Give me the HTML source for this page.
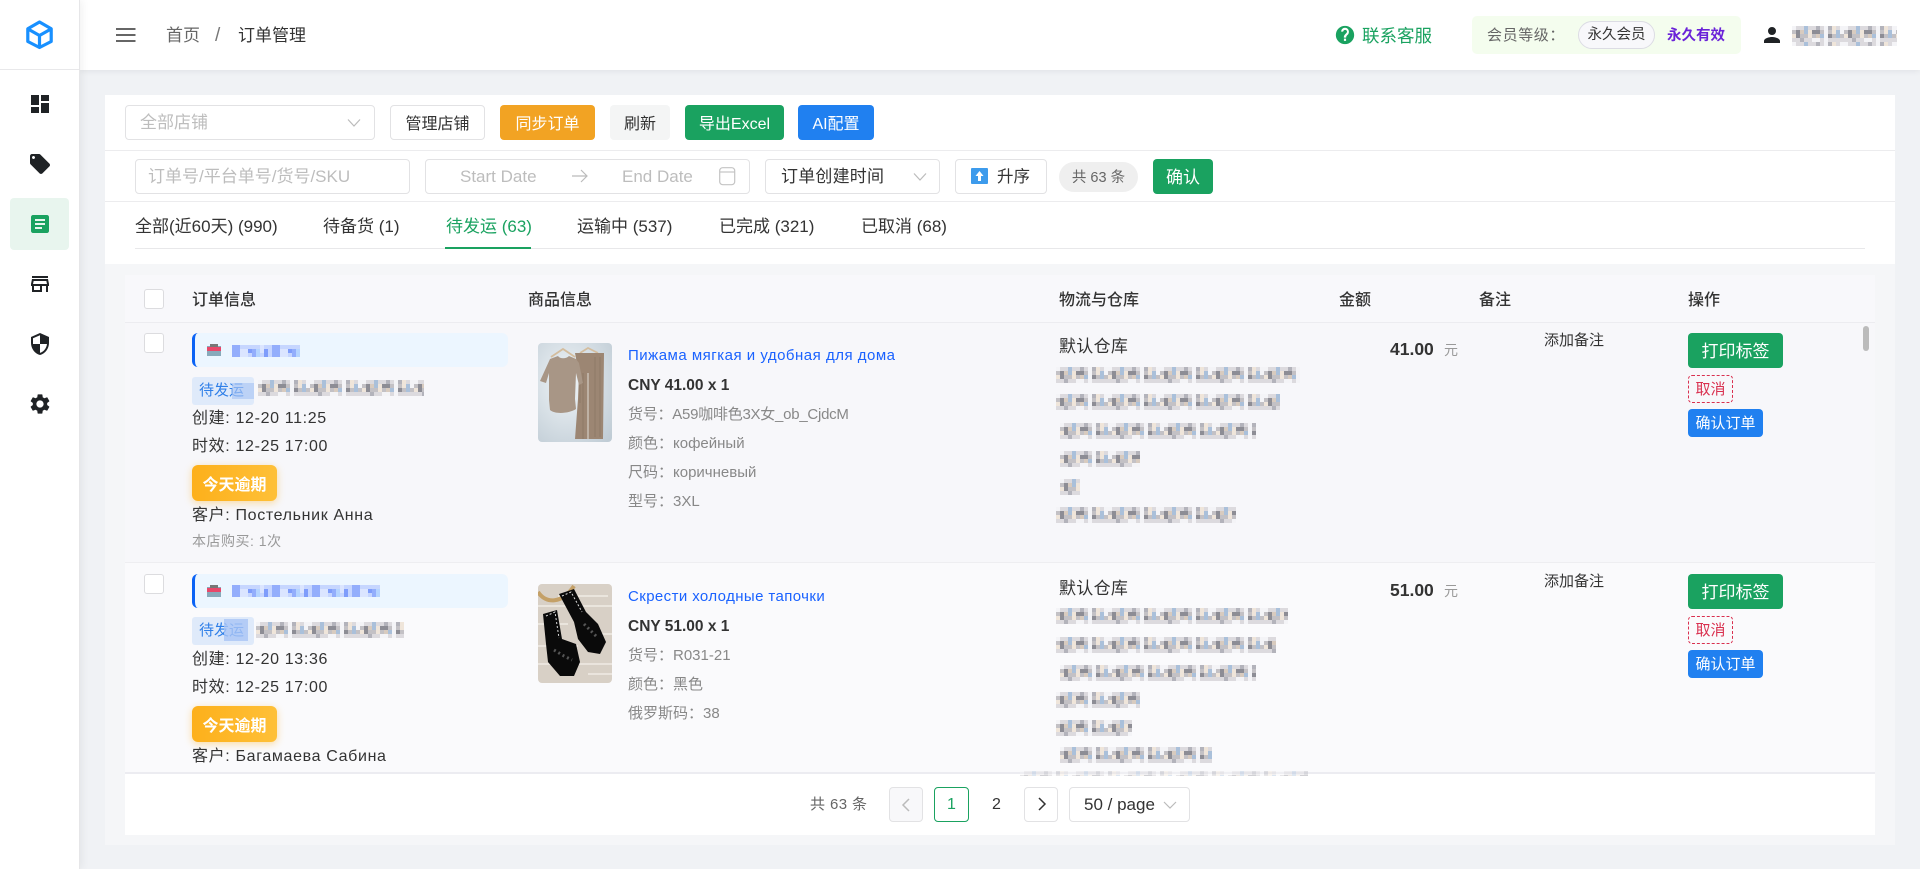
<!DOCTYPE html>
<html lang="zh-CN"><head><meta charset="utf-8"><title>订单管理</title>
<style>
*{box-sizing:border-box}
html,body{margin:0;padding:0;width:1920px;height:869px;overflow:hidden;background:#f0f2f5;font-family:"Liberation Sans","Noto Sans CJK SC",sans-serif;color:#333}
.a{position:absolute}
.t{position:absolute;white-space:nowrap;line-height:24px;height:24px}
.b{position:absolute;display:flex;align-items:center;justify-content:center;border-radius:4px;font-size:16px;white-space:nowrap;padding-bottom:2px}
.o{background:#fff;border:1px solid #e2e2e4;color:#333}
.in{position:absolute;background:#fff;border:1px solid #e2e2e4;border-radius:4px}
.ph{color:#bdbdbd}
.g{color:#888;font-size:15px}
.d{font-size:16px;color:#333;letter-spacing:.65px}
.over{position:absolute;left:192px;width:85px;height:36px;border-radius:6px;background:linear-gradient(90deg,#fdb01b,#fec038);box-shadow:0 2px 8px rgba(253,176,27,.4);color:#fff;font-weight:700;font-size:16px;display:flex;align-items:center;justify-content:center}
.shop{position:absolute;left:192px;width:316px;height:34px;background:#ecf6ff;border-left:3px solid #0a62f5;border-radius:6px}
.tag{position:absolute;left:192px;width:62px;height:28px;background:#dfeafa;border-radius:3px;color:#2f7fe8;font-size:15px;line-height:28px;padding-left:7px;overflow:hidden}
.cb{position:absolute;left:144px;width:20px;height:20px;background:#fff;border:1px solid #dcdcdf;border-radius:3px}
.tab{font-size:17px;top:215px}
.th{font-size:16px;font-weight:500;top:289px}
</style></head><body>

<!-- sidebar -->
<div class="a" style="left:0;top:0;width:80px;height:869px;background:#fff;border-right:1px solid #e6e6e8;box-shadow:2px 0 8px rgba(0,0,0,.06);z-index:3"></div>
<div class="a" style="left:0;top:69px;width:79px;height:1px;background:#e8e8ea;z-index:4"></div>
<div class="a" style="left:10px;top:198px;width:59px;height:52px;background:#e8f5ee;border-radius:4px;z-index:4"></div>
<svg class="a" style="left:0;top:0;z-index:5" width="80" height="440" viewBox="0 0 80 440">
<path d="M39.500 22 51.200 28.800V41.500L39.500 47.500 27.800 41.500V28.800Z M28 29 39.500 35.500 51 29 M39.500 35.500V47" fill="none" stroke="#1890ff" stroke-width="3.200" stroke-linejoin="round"/>
<g transform="translate(28 92)" fill="#1f2225"><path d="M3 13h8V3H3v10zm0 8h8v-6H3v6zm10 0h8V11h-8v10zm0-18v6h8V3h-8z"/></g>
<g transform="translate(28 152)" fill="#1f2225"><path d="M21.410 11.580l-9-9C12.050 2.220 11.550 2 11 2H4c-1.100 0-2 .9-2 2v7c0 .55.22 1.050.59 1.420l9 9c.36.36.86.58 1.410.58.55 0 1.050-.22 1.410-.59l7-7c.37-.36.59-.86.59-1.410 0-.55-.23-1.060-.59-1.420zM5.500 7C4.670 7 4 6.330 4 5.500S4.670 4 5.500 4 7 4.670 7 5.500 6.330 7 5.500 7z"/></g>
<g transform="translate(28 212)" fill="#1aa260"><path d="M19 3H5c-1.100 0-2 .9-2 2v14c0 1.100.9 2 2 2h14c1.100 0 2-.9 2-2V5c0-1.100-.9-2-2-2zm-5 14H7v-2h7v2zm3-4H7v-2h10v2zm0-4H7V7h10v2z"/></g>
<g transform="translate(28 272)" fill="#1f2225"><path d="M18.360 9l.6 3H5.040l.6-3h12.720M20 4H4v2h16V4zm0 3H4l-1 5v2h1v6h10v-6h4v6h2v-6h1v-2l-1-5zM6 18v-4h6v4H6z"/></g>
<g transform="translate(28 332)" fill="#1f2225"><path d="M12 1 3 5v6c0 5.550 3.840 10.740 9 12 5.160-1.260 9-6.450 9-12V5l-9-4zm0 10.990h7c-.53 4.120-3.280 7.790-7 8.940V12H5V6.300l7-3.110v8.800z"/></g>
<g transform="translate(28 392)" fill="#1f2225"><path d="M19.140 12.940c.04-.3.060-.61.060-.94 0-.32-.020-.64-.070-.94l2.030-1.580a.49.49 0 0 0 .12-.61l-1.920-3.320a.488.488 0 0 0-.59-.22l-2.390.96c-.5-.38-1.030-.7-1.620-.94l-.36-2.540a.484.484 0 0 0-.48-.41h-3.840c-.24 0-.43.170-.47.41l-.36 2.540c-.59.24-1.130.57-1.620.94l-2.390-.96c-.22-.08-.47 0-.59.22L2.740 8.870c-.12.210-.08.470.12.610l2.030 1.580c-.05.3-.09.630-.09.940s.020.640.070.940l-2.030 1.580a.49.49 0 0 0-.12.610l1.920 3.320c.12.220.37.290.59.220l2.390-.96c.5.380 1.030.7 1.620.94l.36 2.540c.05.240.24.410.48.410h3.840c.24 0 .44-.17.470-.41l.36-2.540c.59-.24 1.130-.56 1.620-.94l2.390.96c.22.080.47 0 .59-.22l1.920-3.320c.12-.22.070-.47-.12-.61l-2.010-1.580zM12 15.600c-1.980 0-3.600-1.620-3.600-3.600s1.620-3.600 3.600-3.600 3.600 1.620 3.600 3.600-1.620 3.600-3.600 3.600z"/></g>
</svg>

<!-- header -->
<div class="a" style="left:80px;top:0;width:1840px;height:70px;background:#fff;box-shadow:0 1px 6px rgba(0,0,0,.07);z-index:2"></div>
<div style="position:absolute;left:0;top:0;z-index:6">
<svg class="a" style="left:116px;top:28px" width="20" height="14"><path d="M0 1h19.500M0 7h19.500M0 13h19.500" stroke="#666" stroke-width="2"/></svg>
<div class="t" style="left:166px;top:24px;font-size:17px;color:#666">首页</div>
<div class="t" style="left:215px;top:24px;font-size:19px;color:#777">/</div>
<div class="t" style="left:238px;top:24px;font-size:17px;color:#333">订单管理</div>
<svg class="a" style="left:1335px;top:25px" width="20" height="20" viewBox="0 0 24 24"><path fill="#1aa260" d="M12 1a11 11 0 1 0 0 22 11 11 0 0 0 0-22zm1.300 18h-2.600v-2.600h2.600V19zm2.700-8.100-1.100 1.100c-.9.900-1.500 1.600-1.500 3.200h-2.800v-.6c0-1.400.6-2.500 1.500-3.400l1.600-1.600c.4-.4.700-1 .7-1.600 0-1.200-1-2.200-2.200-2.200S9.800 6.800 9.800 8H7.300a4.700 4.700 0 0 1 9.400 0c0 1.100-.3 2.100-.7 2.900z"/></svg>
<div class="t" style="left:1362px;top:24px;font-size:17.500px;color:#1aa260">联系客服</div>
<div class="a" style="left:1472px;top:16px;width:269px;height:38px;background:#f4fdee;border-radius:5px"></div>
<div class="t" style="left:1487px;top:24px;font-size:15px;color:#666;letter-spacing:.6px">会员等级：</div>
<div class="a" style="left:1578px;top:21px;width:77px;height:28px;background:#f8f8fb;border:1px solid #dcdce4;border-radius:14px;font-size:14.500px;line-height:26px;text-align:center;color:#333">永久会员</div>
<div class="t" style="left:1667px;top:24px;font-size:14.500px;font-weight:700;color:#6a22d8">永久有效</div>
<svg class="a" style="left:1760px;top:23px" width="24" height="24" viewBox="0 0 24 24"><path fill="#1f2225" d="M12 12a4 4 0 1 0 0-8 4 4 0 0 0 0 8zm0 2c-2.700 0-8 1.300-8 4v2h16v-2c0-2.700-5.300-4-8-4z"/></svg>
</div>

<!-- main card -->
<div class="a" style="left:105px;top:95px;width:1790px;height:169px;background:#fff"></div>
<div class="a" style="left:105px;top:264px;width:1790px;height:581px;background:#f5f6f8"></div>
<div class="a" style="left:105px;top:150px;width:1790px;height:1px;background:#ececee"></div>
<div class="a" style="left:105px;top:201px;width:1790px;height:1px;background:#ececee"></div>

<div class="in" style="left:125px;top:105px;width:250px;height:35px"></div>
<div class="t ph" style="left:140px;top:111px;font-size:17px">全部店铺</div>
<svg class="a" style="left:347px;top:118px" width="14" height="10"><path d="M1 1.500 7 8l6-6.500" fill="none" stroke="#bbb" stroke-width="1.200"/></svg>
<div class="b o" style="left:390px;top:105px;width:95px;height:35px">管理店铺</div>
<div class="b" style="left:500px;top:105px;width:95px;height:35px;background:#f2a323;color:#fff">同步订单</div>
<div class="b" style="left:610px;top:105px;width:60px;height:35px;background:#f4f5f5;color:#333">刷新</div>
<div class="b" style="left:685px;top:105px;width:99px;height:35px;background:#1aa260;color:#fff">导出Excel</div>
<div class="b" style="left:798px;top:105px;width:76px;height:35px;background:#2080f0;color:#fff">AI配置</div>

<div class="in" style="left:135px;top:159px;width:275px;height:35px"></div>
<div class="t ph" style="left:148px;top:165px;font-size:17px">订单号/平台单号/货号/SKU</div>
<div class="in" style="left:425px;top:159px;width:325px;height:35px"></div>
<div class="t ph" style="left:460px;top:165px;font-size:17px">Start Date</div>
<svg class="a" style="left:572px;top:169px" width="16" height="14"><path d="M0 7h15M9 1l6 6-6 6" fill="none" stroke="#bbb" stroke-width="1.200"/></svg>
<div class="t ph" style="left:622px;top:165px;font-size:17px">End Date</div>
<svg class="a" style="left:719px;top:167px" width="17" height="19"><rect x=".7" y=".7" width="15" height="17" rx="3" fill="none" stroke="#c4c4c4" stroke-width="1.200"/><path d="M1 5h15" stroke="#c4c4c4" stroke-width="1.200"/></svg>
<div class="in" style="left:765px;top:159px;width:175px;height:35px"></div>
<div class="t" style="left:781px;top:165px;font-size:17px;letter-spacing:.2px">订单创建时间</div>
<svg class="a" style="left:913px;top:172px" width="14" height="10"><path d="M1 1.500 7 8l6-6.500" fill="none" stroke="#bbb" stroke-width="1.200"/></svg>
<div class="in" style="left:955px;top:159px;width:92px;height:35px"></div>
<svg class="a" style="left:971px;top:168px" width="17" height="16"><rect width="17" height="16" rx="1" fill="#3d9bec"/><path d="M8.500 3 12.500 8h-2.500v5H7V8H4.500z" fill="#fff"/></svg>
<div class="t" style="left:997px;top:165px;font-size:16.500px">升序</div>
<div class="a" style="left:1059px;top:162px;width:79px;height:30px;background:#efefef;border-radius:15px;color:#666;font-size:14.500px;line-height:32px;text-align:center">共 63 条</div>
<div class="b" style="left:1153px;top:159px;width:60px;height:35px;background:#1aa260;color:#fff;font-size:17px">确认</div>

<div class="a" style="left:135px;top:248px;width:1730px;height:1px;background:#e8e8ea"></div>
<div class="a" style="left:445px;top:247px;width:86px;height:2px;background:#1aa260"></div>
<div class="t tab" style="left:135px">全部(近60天) (990)</div>
<div class="t tab" style="left:323px">待备货 (1)</div>
<div class="t tab" style="left:446px;color:#1aa260">待发运 (63)</div>
<div class="t tab" style="left:577px">运输中 (537)</div>
<div class="t tab" style="left:719px">已完成 (321)</div>
<div class="t tab" style="left:861px">已取消 (68)</div>

<!-- table -->
<div class="a" style="left:125px;top:275px;width:1750px;height:498px;overflow:hidden;background:#fafafc;border-radius:4px 4px 0 0"></div>
<div class="a" style="left:125px;top:275px;width:1750px;height:48px;background:#f8f8fb;border-bottom:1px solid #ececf0"></div>
<div class="a" style="left:125px;top:323px;width:1750px;height:240px;background:#f7f7fa;border-bottom:1px solid #eeeef1"></div>
<div class="a" style="left:125px;top:772px;width:1750px;height:2px;background:#ececf1"></div>
<div class="cb" style="top:289px"></div>
<div class="t th" style="left:192px">订单信息</div>
<div class="t th" style="left:528px">商品信息</div>
<div class="t th" style="left:1059px">物流与仓库</div>
<div class="t th" style="left:1339px">金额</div>
<div class="t th" style="left:1479px">备注</div>
<div class="t th" style="left:1688px">操作</div>
<div class="a" style="left:1863px;top:326px;width:6px;height:25px;background:#bbb;border-radius:3px"></div>

<!-- row 1 -->
<div class="cb" style="top:333px"></div>
<div class="shop" style="top:333px"></div>
<div class="tag" style="top:377px">待发运</div>
<div class="t d" style="left:192px;top:406px;margin-top:1px">创建: 12-20 11:25</div>
<div class="t d" style="left:192px;top:435px">时效: 12-25 17:00</div>
<div class="over" style="top:465px">今天逾期</div>
<div class="t d" style="left:192px;top:504px">客户: Постельник Анна</div>
<div class="t" style="left:192px;top:529px;font-size:14px;color:#999;letter-spacing:.5px">本店购买: 1次</div>
<svg class="a" style="left:538px;top:343px;border-radius:4px" width="74" height="99" viewBox="0 0 74 99">
<defs><radialGradient id="pj" cx=".4" cy=".4" r=".8"><stop offset="0" stop-color="#f0f5f8"/><stop offset="1" stop-color="#c0ccd5"/></radialGradient></defs>
<rect width="74" height="99" fill="url(#pj)"/>
<path d="M13 14 25 6l12 8M42 10l8-5 10 5" fill="none" stroke="#d4bd9e" stroke-width="1.800"/>
<path d="M37 10h29l-1 86H37l3-40 1-25z" fill="#9c8673"/>
<path d="M50 30v66" stroke="#c9bfb4" stroke-width="1.500"/>
<path d="M42 30v30M45 30v66M57 14v80M62 14v80" stroke="#86725f" stroke-width="1" opacity=".6"/>
<path d="M12 16 20 13c2 3 8 3 11 0l7 3 3 4 4 20-4 2-3-12-1 26 1 10c-6 4-20 6-26 1l-1-10 0-27-3 10-6-2z" fill="#a89686"/>
</svg>
<div class="t" style="left:628px;top:344px;font-size:15px;color:#1a62ff;letter-spacing:.5px">Пижама мягкая и удобная для дома</div>
<div class="t" style="left:628px;top:374px;font-size:15.500px;font-weight:700;color:#333">CNY 41.00 x 1</div>
<div class="t g" style="left:628px;top:403px;letter-spacing:-.25px">货号：A59咖啡色3X女_ob_CjdcM</div>
<div class="t g" style="left:628px;top:432px">颜色：кофейный</div>
<div class="t g" style="left:628px;top:461px">尺码：коричневый</div>
<div class="t g" style="left:628px;top:490px">型号：3XL</div>
<div class="t" style="left:1059px;top:335px;font-size:17px;letter-spacing:.3px">默认仓库</div>
<div class="t" style="left:1390px;top:337px;font-size:17.500px;font-weight:700">41.00</div>
<div class="t" style="left:1444px;top:338px;font-size:14px;color:#999">元</div>
<div class="t" style="left:1544px;top:329px;font-size:15px;color:#333">添加备注</div>
<div class="b" style="left:1688px;top:333px;width:95px;height:35px;background:#1aa260;color:#fff;font-size:17px">打印标签</div>
<div class="b" style="left:1688px;top:375px;width:45px;height:28px;border:1px dashed #d9304f;color:#d9304f;font-size:15px">取消</div>
<div class="b" style="left:1688px;top:409px;width:75px;height:28px;background:#2080f0;color:#fff;font-size:15px">确认订单</div>

<!-- row 2 -->
<div class="a" style="left:125px;top:564px;width:1750px;height:208px;overflow:hidden">
<div class="cb" style="left:19px;top:10px"></div>
<div class="shop" style="left:67px;top:10px"></div>
<div class="tag" style="left:67px;top:53px">待发运</div>
<div class="t d" style="left:67px;top:84px">创建: 12-20 13:36</div>
<div class="t d" style="left:67px;top:112px">时效: 12-25 17:00</div>
<div class="over" style="left:67px;top:142px">今天逾期</div>
<div class="t d" style="left:67px;top:181px">客户: Багамаева Сабина</div>
<svg class="a" style="left:413px;top:20px;border-radius:4px" width="74" height="99" viewBox="0 0 74 99">
<rect width="74" height="99" fill="#d8d0c6"/>
<path d="M0 22h74M0 40h30M40 50h34M0 62h40M0 80h74M50 90h24M20 12h50" stroke="#efeae3" stroke-width="2" opacity=".8"/>
<path d="M0 8C8 20 24 20 36 2" fill="none" stroke="#c4a067" stroke-width="4"/>
<path d="M21 10 36 5 48 28 60 40 68 58 62 70 50 68 40 55 36 38z" fill="#0a0a0a"/>
<path d="M5 30 19 26 24 55 38 60 42 78 36 92 22 92 10 78 8 60z" fill="#0a0a0a"/>
<path d="M24 12 33 8 44 28M8 32l9-4 4 26" fill="none" stroke="#ddd" stroke-width="1" stroke-dasharray="2 2"/>
<path d="M16 66l10 6 8 4M46 40l8 8 6 6" stroke="#555" stroke-width="3" stroke-dasharray="2 3" fill="none"/>
</svg>
<div class="t" style="left:503px;top:21px;font-size:15px;color:#1a62ff;letter-spacing:.4px">Скрести холодные тапочки</div>
<div class="t" style="left:503px;top:51px;font-size:15.500px;font-weight:700;color:#333">CNY 51.00 x 1</div>
<div class="t g" style="left:503px;top:80px">货号：R031-21</div>
<div class="t g" style="left:503px;top:109px">颜色：黑色</div>
<div class="t g" style="left:503px;top:138px">俄罗斯码：38</div>
<div class="t" style="left:934px;top:13px;font-size:17px;letter-spacing:.3px">默认仓库</div>
<div class="t" style="left:1265px;top:14px;font-size:17.500px;font-weight:700">51.00</div>
<div class="t" style="left:1319px;top:15px;font-size:14px;color:#999">元</div>
<div class="t" style="left:1419px;top:6px;font-size:15px;color:#333">添加备注</div>
<div class="b" style="left:1563px;top:10px;width:95px;height:35px;background:#1aa260;color:#fff;font-size:17px">打印标签</div>
<div class="b" style="left:1563px;top:52px;width:45px;height:28px;border:1px dashed #d9304f;color:#d9304f;font-size:15px">取消</div>
<div class="b" style="left:1563px;top:86px;width:75px;height:28px;background:#2080f0;color:#fff;font-size:15px">确认订单</div>
</div>

<!-- pagination -->
<div class="a" style="left:125px;top:774px;width:1750px;height:61px;background:#fff"></div>
<div class="t" style="left:810px;top:793px;font-size:15px;color:#666;letter-spacing:.4px">共 63 条</div>
<div class="a" style="left:889px;top:787px;width:34px;height:35px;background:#f8f8fa;border:1px solid #e2e2e4;border-radius:4px"></div>
<svg class="a" style="left:901px;top:798px" width="10" height="14"><path d="M8 1 2 7l6 6" fill="none" stroke="#bbb" stroke-width="1.500"/></svg>
<div class="a" style="left:934px;top:787px;width:35px;height:35px;border:1px solid #1aa260;border-radius:4px;color:#1aa260;font-size:16px;line-height:33px;text-align:center">1</div>
<div class="t" style="left:992px;top:793px;font-size:16px">2</div>
<div class="a" style="left:1024px;top:787px;width:34px;height:35px;background:#fff;border:1px solid #e2e2e4;border-radius:4px"></div>
<svg class="a" style="left:1037px;top:797px" width="10" height="14"><path d="M2 1l6 6-6 6" fill="none" stroke="#333" stroke-width="1.500"/></svg>
<div class="a" style="left:1069px;top:787px;width:121px;height:35px;background:#fff;border:1px solid #e2e2e4;border-radius:4px"></div>
<div class="t" style="left:1084px;top:793px;font-size:17px">50 / page</div>
<svg class="a" style="left:1163px;top:801px" width="14" height="9"><path d="M1 1l6 6 6-6" fill="none" stroke="#bbb" stroke-width="1.200"/></svg>

<!-- mosaic overlays -->
<svg class="a" style="left:0;top:0;z-index:7;pointer-events:none" width="1920" height="869">
<defs>
<pattern id="mg" width="52" height="16" patternUnits="userSpaceOnUse">
<path fill="#dcdade" d="M0 0h52v16H0z"/>
<path fill="#c3c1c5" d="M0 4h52v8H0z"/>
<path fill="#8d8d95" d="M4 4h4v8H4z M20 4h8v4h-8z M36 8h4v4h-4z"/>
<path fill="#aac0da" d="M12 0h4v8h-4z M28 8h4v4h-4z M44 4h4v8h-4z"/>
<path fill="#efe5da" d="M0 8h4v4H0z M16 4h4v8h-4z M40 0h4v8h-4z"/>
<path fill="#f4f4f7" d="M32 0h4v16h-4z M48 0h4v8h-4z M0 0h4v4H0z M20 12h8v4h-8z"/>
<path fill="#b3b3bb" d="M24 0h4v4h-4z M8 12h4v4H8z M36 0h4v4h-4z"/>
<path fill="#d8cbbf" d="M8 4h4v4H8z M24 8h4v4h-4z"/>
</pattern>
<pattern id="mb" width="40" height="12" patternUnits="userSpaceOnUse">
<path fill="#c6d6ff" d="M0 0h40v12H0z"/>
<path fill="#93aefc" d="M0 0h8v12H0z M20 4h4v8h-4z"/>
<path fill="#dbe5ff" d="M8 4h8v8H8z M28 0h4v8h-4z"/>
<path fill="#7f9dfb" d="M16 4h4v4h-4z M32 4h4v8h-4z"/>
<path fill="#b4d4ff" d="M24 4h4v8h-4z"/>
</pattern>
</defs>
<rect transform="translate(1792 26)" width="105" height="20" fill="url(#mg)"/>
<g>
<rect transform="translate(232 345)" width="68" height="12" fill="url(#mb)"/>
<rect transform="translate(232 383)" width="22" height="16" fill="#a9c4f5" opacity=".65"/>
<rect transform="translate(258 380)" width="166" height="16" fill="url(#mg)"/>
<rect transform="translate(1056 367)" width="244" height="16" fill="url(#mg)"/>
<rect transform="translate(1056 394)" width="224" height="16" fill="url(#mg)"/>
<rect transform="translate(1060 423)" width="196" height="16" fill="url(#mg)"/>
<rect transform="translate(1060 451)" width="80" height="16" fill="url(#mg)"/>
<rect transform="translate(1060 479)" width="20" height="16" fill="url(#mg)"/>
<rect transform="translate(1056 507)" width="180" height="16" fill="url(#mg)"/>
</g>
<g>
<rect transform="translate(232 585)" width="148" height="12" fill="url(#mb)"/>
<rect transform="translate(224 619)" width="24" height="22" fill="#a9c4f5" opacity=".8"/>
<rect transform="translate(256 622)" width="148" height="16" fill="url(#mg)"/>
<rect transform="translate(1056 608)" width="232" height="16" fill="url(#mg)"/>
<rect transform="translate(1056 637)" width="220" height="16" fill="url(#mg)"/>
<rect transform="translate(1060 665)" width="196" height="16" fill="url(#mg)"/>
<rect transform="translate(1056 692)" width="84" height="16" fill="url(#mg)"/>
<rect transform="translate(1056 720)" width="76" height="16" fill="url(#mg)"/>
<rect transform="translate(1060 747)" width="152" height="16" fill="url(#mg)"/>
<rect transform="translate(1020 771)" width="288" height="5" fill="url(#mg)" opacity=".4"/>
</g>
<g>
<rect x="207" y="346" width="14" height="10" fill="#8ab"/><rect x="207" y="347" width="14" height="4" fill="#e8486a"/><rect x="210" y="344" width="8" height="3" fill="#777"/>
<rect x="207" y="587" width="14" height="10" fill="#8ab"/><rect x="207" y="588" width="14" height="4" fill="#e8486a"/><rect x="210" y="585" width="8" height="3" fill="#777"/>
</g>
</svg>
</body></html>
